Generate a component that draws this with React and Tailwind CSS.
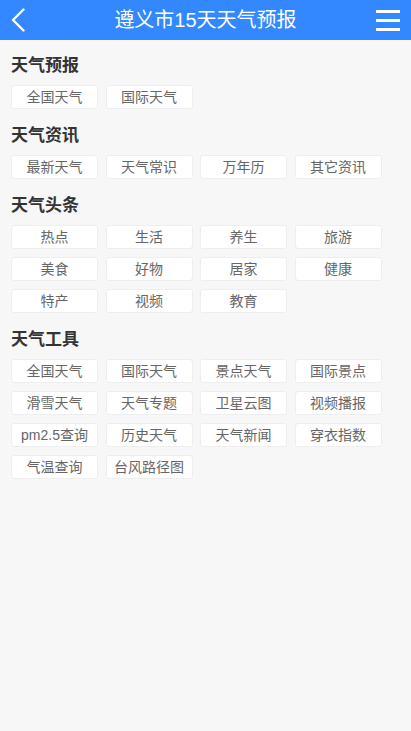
import React from "react";

// 天气导航分区
const SECTIONS = [
  { title: "天气预报", items: ["全国天气", "国际天气"] },
  { title: "天气资讯", items: ["最新天气", "天气常识", "万年历", "其它资讯"] },
  {
    title: "天气头条",
    items: ["热点", "生活", "养生", "旅游", "美食", "好物", "居家", "健康", "特产", "视频", "教育"],
  },
  {
    title: "天气工具",
    items: [
      "全国天气", "国际天气", "景点天气", "国际景点",
      "滑雪天气", "天气专题", "卫星云图", "视频播报",
      "pm2.5查询", "历史天气", "天气新闻", "穿衣指数",
      "气温查询", "台风路径图",
    ],
  },
];

export default function App() {
  return (
    <div
      className="min-h-[731px] bg-[#f7f7f7]"
      style={{ fontFamily: '"Liberation Sans", "Noto Sans CJK SC", sans-serif' }}
    >
      {/* Header */}
      <header className="h-[40px] bg-[#3388ff] flex items-center justify-between px-[11px] text-white">
        <button className="w-[24px] h-[40px] flex items-center">
          <svg width="14" height="24" viewBox="0 0 14 24" fill="none">
            <path d="M12.5 1.5 L2 12 L12.5 22.5" stroke="white" strokeWidth="2.4" strokeLinecap="round" strokeLinejoin="round" />
          </svg>
        </button>
        <h1 className="text-[20px] leading-none">遵义市15天天气预报</h1>
        <button className="w-[24px] h-[40px] flex flex-col justify-center gap-[6px]">
          <span className="block h-[3px] w-[24px] bg-white" />
          <span className="block h-[3px] w-[24px] bg-white" />
          <span className="block h-[3px] w-[24px] bg-white" />
        </button>
      </header>

      {/* Sections */}
      <main className="pt-[7px] px-[11px]">
        {SECTIONS.map((s) => (
          <section key={s.title}>
            <div className="h-[38px] pb-[1px] flex items-center text-[17px] font-bold text-[#333]">
              {s.title}
            </div>
            <div className="grid grid-cols-[repeat(4,87px)] gap-x-[7.5px] gap-y-[8px] mb-[8px]">
              {s.items.map((it) => (
                <a
                  key={it}
                  className="h-[24px] flex items-center justify-center bg-white border border-[#eeeeee] rounded-[3px] text-[14px] text-[#666]"
                >
                  {it}
                </a>
              ))}
            </div>
          </section>
        ))}
      </main>
    </div>
  );
}
